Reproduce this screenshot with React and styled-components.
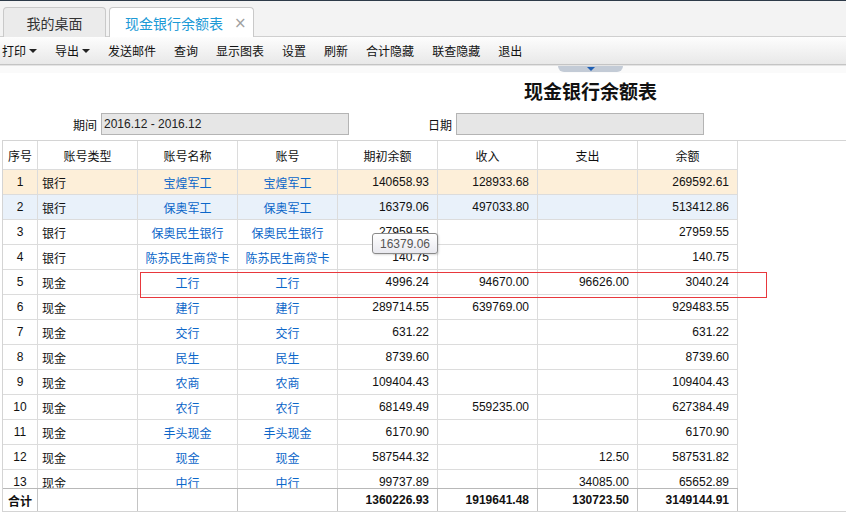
import React from "react";
import styled, { createGlobalStyle } from "styled-components";

const Global = createGlobalStyle`
  html, body { margin: 0; padding: 0; background: #fff; overflow: hidden; }
  body { font-family: "Liberation Sans", "Noto Sans CJK SC", sans-serif; font-size: 12px; color: #111; }
  * { box-sizing: border-box; }
`;

const Page = styled.div`
  width: 846px;
  height: 518px;
  overflow: hidden;
  display: flex;
  flex-direction: column;
`;

const TopLine = styled.div`
  height: 1px;
  background: #2d3a48;
  flex: none;
`;

const TabBar = styled.div`
  height: 36px;
  flex: none;
  background: #f3f3f3;
  border-bottom: 1px solid #cfcfcf;
  display: flex;
  align-items: flex-end;
  gap: 3px;
  padding-left: 3px;
`;

const Tab = styled.div`
  height: 30px;
  width: ${(p) => p.$w}px;
  border: 1px solid #c9c9c9;
  border-bottom: none;
  border-radius: 4px 4px 0 0;
  background: ${(p) => (p.$active ? "#fff" : "#ebebeb")};
  color: ${(p) => (p.$active ? "#1d9ad6" : "#333")};
  font-size: 14px;
  display: flex;
  align-items: center;
  justify-content: ${(p) => (p.$active ? "flex-start" : "center")};
  padding-left: ${(p) => (p.$active ? "15px" : "0")};
  margin-bottom: -1px;
`;

const Close = styled.span`
  color: #a0a0a0;
  font-size: 15px;
  margin-left: 11px;
  font-family: "DejaVu Sans", sans-serif;
`;

const Toolbar = styled.div`
  height: 28px;
  flex: none;
  background: linear-gradient(#fdfdfd, #e8e8e8);
  border-bottom: 1px solid #c4c4c4;
  display: flex;
  align-items: center;
  gap: 18px;
  padding-left: 2px;
`;

const ToolItem = styled.span`
  font-size: 12px;
  color: #111;
  display: inline-flex;
  align-items: center;
`;

const Caret = styled.span`
  width: 0;
  height: 0;
  margin-left: 3px;
  border-left: 4px solid transparent;
  border-right: 4px solid transparent;
  border-top: 4px solid #222;
`;

const CenterStrip = styled.div`
  width: 1181px;
  flex: none;
  display: flex;
  justify-content: center;
`;

const HandleStrip = styled(CenterStrip)`
  height: 8px;
  border-top: 1px solid #e4e4e4;
  background: #fafafa;
`;

const Handle = styled.div`
  width: 65px;
  height: 6px;
  background: #c3cbd6;
  border-radius: 0 0 6px 6px;
  display: flex;
  justify-content: center;
`;

const HandleArrow = styled.span`
  width: 0;
  height: 0;
  margin-top: 1px;
  border-left: 4px solid transparent;
  border-right: 4px solid transparent;
  border-top: 4px solid #1f5fb3;
`;

const TitleStrip = styled(CenterStrip)`
  height: 40px;
  padding-top: 8px;
`;

const Title = styled.h1`
  margin: 0;
  font-size: 19px;
  line-height: 24px;
  font-weight: bold;
  color: #111;
`;

const FilterRow = styled.div`
  height: 22px;
  flex: none;
  display: flex;
  align-items: center;
`;

const FieldLabel = styled.span`
  width: ${(p) => p.$w}px;
  text-align: right;
  padding-right: 4px;
  font-size: 12px;
  color: #111;
`;

const FieldInput = styled.div`
  width: 248px;
  height: 22px;
  background: #e6e6e6;
  border: 1px solid #b4b4b4;
  font-size: 12px;
  line-height: 20px;
  padding-left: 2px;
  color: #222;
`;

const GridWrap = styled.div`
  position: relative;
  margin: 5px 0 0 2px;
  flex: none;
  border-top: 1px solid #d4d4d4;
  border-bottom: 1px solid #d4d4d4;
  border-left: 1px solid #d4d4d4;
`;

const Row = styled.div`
  display: grid;
  grid-template-columns: 35px repeat(7, 100px);
  width: 735px;
  height: ${(p) => p.$h}px;
  background: ${(p) => p.$bg || "#fff"};
  border-top: ${(p) => (p.$foot ? "1px solid #b8b8b8" : "none")};
`;

const Cell = styled.div`
  border-right: 1px solid ${(p) => (p.$foot ? "#c4c4c4" : "#dcdcdc")};
  border-bottom: ${(p) => (p.$foot ? "none" : "1px solid #dcdcdc")};
  display: flex;
  align-items: center;
  justify-content: ${(p) =>
    p.$align === "left" ? "flex-start" : p.$align === "right" ? "flex-end" : "center"};
  padding: ${(p) => (p.$align === "left" ? "0 0 0 4px" : p.$align === "right" ? "0 8px 0 0" : "0")};
  font-size: 12px;
  white-space: nowrap;
  overflow: hidden;
  color: ${(p) => (p.$link ? "#0b66c9" : "#111")};
  font-weight: ${(p) => (p.$bold ? "bold" : "normal")};
`;

const Body = styled.div`
  height: 318px;
  overflow: hidden;
`;

const Highlight = styled.div`
  position: absolute;
  left: 137px;
  top: 131px;
  width: 627px;
  height: 26px;
  border: 1px solid #e8383d;
  pointer-events: none;
`;

const Tooltip = styled.div`
  position: absolute;
  left: 369px;
  top: 92px;
  width: 66px;
  height: 21px;
  border: 1px solid #8a8a8a;
  border-radius: 3px;
  background: linear-gradient(#ffffff, #e9e9ef);
  color: #555;
  font-size: 12px;
  display: flex;
  align-items: center;
  justify-content: center;
  box-shadow: 1px 1px 2px rgba(0, 0, 0, 0.15);
`;

const headers = ["序号", "账号类型", "账号名称", "账号", "期初余额", "收入", "支出", "余额"];

const rows = [
  ["银行", "宝煌军工", "140658.93", "128933.68", "", "269592.61"],
  ["银行", "保奥军工", "16379.06", "497033.80", "", "513412.86"],
  ["银行", "保奥民生银行", "27959.55", "", "", "27959.55"],
  ["银行", "陈苏民生商贷卡", "140.75", "", "", "140.75"],
  ["现金", "工行", "4996.24", "94670.00", "96626.00", "3040.24"],
  ["现金", "建行", "289714.55", "639769.00", "", "929483.55"],
  ["现金", "交行", "631.22", "", "", "631.22"],
  ["现金", "民生", "8739.60", "", "", "8739.60"],
  ["现金", "农商", "109404.43", "", "", "109404.43"],
  ["现金", "农行", "68149.49", "559235.00", "", "627384.49"],
  ["现金", "手头现金", "6170.90", "", "", "6170.90"],
  ["现金", "现金", "587544.32", "", "12.50", "587531.82"],
  ["现金", "中行", "99737.89", "", "34085.00", "65652.89"],
];

const rowBg = (i) => (i === 0 ? "#fdefd9" : i === 1 ? "#e9f1fa" : "#fff");

const tools = ["发送邮件", "查询", "显示图表", "设置", "刷新", "合计隐藏", "联查隐藏", "退出"];

export default function App() {
  return (
    <Page>
      <Global />
      <TopLine />
      <TabBar>
        <Tab $w={103}>我的桌面</Tab>
        <Tab $w={145} $active>
          现金银行余额表<Close>×</Close>
        </Tab>
      </TabBar>
      <Toolbar>
        <ToolItem>
          打印<Caret />
        </ToolItem>
        <ToolItem>
          导出<Caret />
        </ToolItem>
        {tools.map((t) => (
          <ToolItem key={t}>{t}</ToolItem>
        ))}
      </Toolbar>
      <HandleStrip>
        <Handle>
          <HandleArrow />
        </Handle>
      </HandleStrip>
      <TitleStrip>
        <Title>现金银行余额表</Title>
      </TitleStrip>
      <FilterRow>
        <FieldLabel $w={101}>期间</FieldLabel>
        <FieldInput>2016.12 - 2016.12</FieldInput>
        <FieldLabel $w={107}>日期</FieldLabel>
        <FieldInput />
      </FilterRow>
      <GridWrap>
        <Row $h={29}>
          {headers.map((h) => (
            <Cell key={h}>{h}</Cell>
          ))}
        </Row>
        <Body>
          {rows.map((r, i) => (
            <Row key={i} $h={25} $bg={rowBg(i)}>
              <Cell>{i + 1}</Cell>
              <Cell $align="left">{r[0]}</Cell>
              <Cell $link>{r[1]}</Cell>
              <Cell $link>{r[1]}</Cell>
              <Cell $align="right">{r[2]}</Cell>
              <Cell $align="right">{r[3]}</Cell>
              <Cell $align="right">{r[4]}</Cell>
              <Cell $align="right">{r[5]}</Cell>
            </Row>
          ))}
        </Body>
        <Row $h={23} $foot>
          <Cell $foot $bold>合计</Cell>
          <Cell $foot />
          <Cell $foot />
          <Cell $foot />
          <Cell $foot $bold $align="right">1360226.93</Cell>
          <Cell $foot $bold $align="right">1919641.48</Cell>
          <Cell $foot $bold $align="right">130723.50</Cell>
          <Cell $foot $bold $align="right">3149144.91</Cell>
        </Row>
        <Highlight />
        <Tooltip>16379.06</Tooltip>
      </GridWrap>
    </Page>
  );
}
